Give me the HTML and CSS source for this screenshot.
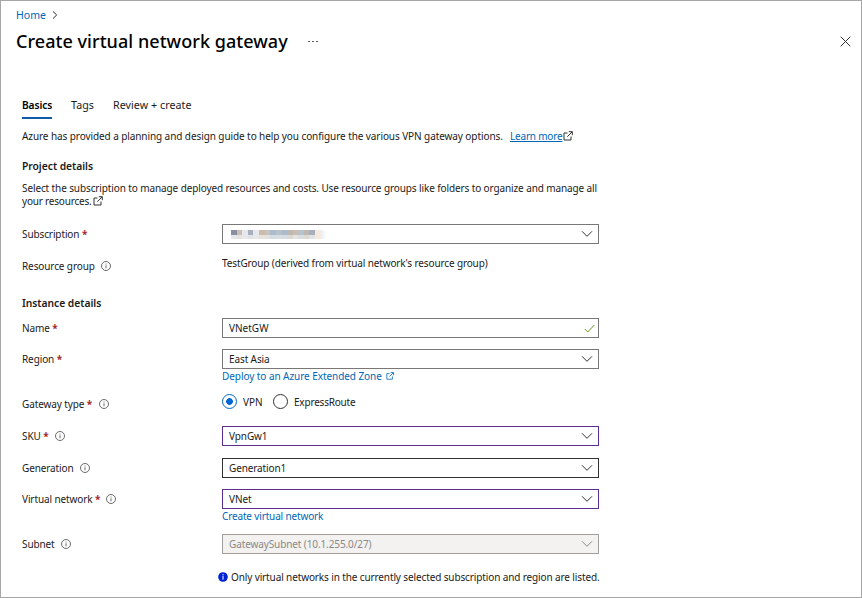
FILE: index.html
```html
<!DOCTYPE html>
<html lang="en">
<head>
    <meta charset="UTF-8">
    <meta name="viewport" content="width=device-width, initial-scale=1.0">
    <title>Create virtual network gateway</title>
    <link rel="stylesheet" href="styles.css">
</head>

<body>
    <!-- shared icons -->
    <svg class="sprite" aria-hidden="true">
        <symbol id="chevron" viewBox="0 0 12 8"><path d="M1 1.3l5 5 5-5"/></symbol>
        <symbol id="info" viewBox="0 0 10 10"><circle cx="5" cy="5" r="4.5"/><path d="M5 4.3v3M5 2.6v.9"/></symbol>
        <symbol id="external" viewBox="0 0 10 10"><path d="M4.5 2H1v7h7V5.5M5.8.7h3.5v3.5M9.2.8L4.3 5.7"/></symbol>
    </svg>

    <div class="blade">
        <nav class="breadcrumb">
            <a href="#">Home</a>
            <svg class="crumb-arrow" viewBox="0 0 6 8"><path d="M1 .5L4.7 4 1 7.5"/></svg>
        </nav>

        <header class="title-bar">
            <h1>Create virtual network gateway</h1>
            <span class="more"><i></i><i></i><i></i></span>
            <svg class="close" viewBox="0 0 11 11"><path d="M.7.7l9.6 9.6M10.3.7L.7 10.3"/></svg>
        </header>

        <div class="tabs">
            <a class="tab active" href="#">Basics</a>
            <a class="tab tab-tags" href="#">Tags</a>
            <a class="tab tab-review" href="#">Review + create</a>
        </div>

        <main>
            <p class="intro"><span>Azure has provided a planning and design guide to help you configure the various VPN gateway options.</span><a class="learn" href="#">Learn more</a><svg class="external"><use href="#external"/></svg></p>

            <h2 class="project">Project details</h2>
            <p class="desc">Select the subscription to manage deployed resources and costs. Use resource groups like folders to organize and manage all<br><span class="desc-end">your resources.</span><svg class="external"><use href="#external"/></svg></p>

            <form>
                <div class="row row-subscription">
                    <label>Subscription <b>*</b></label>
                    <div class="control">
                        <div class="box">
                            <span class="mosaic">
                                <i class="c1"></i><i class="c2"></i><i class="c3"></i><i class="c4"></i><i class="c3"></i><i class="c5"></i><i class="c6"></i><i class="c7"></i><i class="c8"></i><i class="c7"></i><i class="c9"></i><i class="c5"></i><i class="c8"></i><i class="c9"></i><i class="c4"></i><i class="c10"></i><i class="c11"></i>
                            </span>
                            <svg class="chevron"><use href="#chevron"/></svg>
                        </div>
                    </div>
                </div>
                <div class="row row-group">
                    <label>Resource group <svg class="info"><use href="#info"/></svg></label>
                    <div class="control"><span class="value">TestGroup (derived from virtual network's resource group)</span></div>
                </div>

                <h2 class="instance">Instance details</h2>
                <div class="row row-name">
                    <label>Name <b>*</b></label>
                    <div class="control">
                        <div class="box box-name"><span>VNetGW</span><svg class="check" viewBox="0 0 11 9"><path d="M.8 5l3 3L10.3 1"/></svg></div>
                    </div>
                </div>
                <div class="row row-region">
                    <label>Region <b>*</b></label>
                    <div class="control">
                        <div class="box"><span>East Asia</span><svg class="chevron"><use href="#chevron"/></svg></div>
                        <a class="below deploy" href="#">Deploy to an Azure Extended Zone<svg class="external small"><use href="#external"/></svg></a>
                    </div>
                </div>
                <div class="row row-type">
                    <label>Gateway type <b>*</b> <svg class="info"><use href="#info"/></svg></label>
                    <div class="control radios">
                        <span class="radio checked"></span><span class="vpn">VPN</span>
                        <span class="radio"></span><span class="express">ExpressRoute</span>
                    </div>
                </div>
                <div class="row row-sku">
                    <label>SKU <b>*</b> <svg class="info"><use href="#info"/></svg></label>
                    <div class="control">
                        <div class="box edited"><span>VpnGw1</span><svg class="chevron"><use href="#chevron"/></svg></div>
                    </div>
                </div>
                <div class="row row-generation">
                    <label>Generation <svg class="info"><use href="#info"/></svg></label>
                    <div class="control">
                        <div class="box dark"><span>Generation1</span><svg class="chevron"><use href="#chevron"/></svg></div>
                    </div>
                </div>
                <div class="row row-vnet">
                    <label>Virtual network <b>*</b> <svg class="info"><use href="#info"/></svg></label>
                    <div class="control">
                        <div class="box edited"><span>VNet</span><svg class="chevron"><use href="#chevron"/></svg></div>
                        <a class="below create" href="#">Create virtual network</a>
                    </div>
                </div>
                <div class="row row-subnet">
                    <label>Subnet <svg class="info"><use href="#info"/></svg></label>
                    <div class="control">
                        <div class="box disabled"><span>GatewaySubnet (10.1.255.0/27)</span><svg class="chevron"><use href="#chevron"/></svg></div>
                    </div>
                </div>
                <div class="note">
                    <svg class="note-icon" viewBox="0 0 10 10"><circle cx="5" cy="5" r="4.8"/><path d="M5 4v3.7M5 2v1.3"/></svg>
                    <span>Only virtual networks in the currently selected subscription and region are listed.</span>
                </div>
            </form>
        </main>
    </div>
</body>
</html>
```
FILE: styles.css
```css
* {
    box-sizing: border-box;
}

body {
    margin: 0;
    background: #fff;
    color: #1b1a19;
    font-family: "Noto Sans", "Open Sans", sans-serif;
    font-size: 10px;
    line-height: 14px;
    letter-spacing: -0.11px;
}

a {
    color: #0067b8;
    text-decoration: none;
}

h1, h2, p {
    margin: 0;
}

svg {
    fill: none;
    stroke: #323130;
    flex: none;
}

.sprite {
    display: none;
}

.blade {
    width: 862px;
    height: 598px;
    border: 1px solid #a6a6a6;
    overflow: hidden;
    white-space: nowrap;
}

.breadcrumb {
    display: flex;
    align-items: center;
    height: 14px;
    margin: 7px 0 0 15px;
    gap: 6px;
    font-size: 10.5px;
    letter-spacing: 0;
}

.crumb-arrow {
    width: 6px;
    height: 8px;
}

.title-bar {
    display: flex;
    align-items: center;
    height: 26px;
    margin-top: 6px;
    padding: 0 10px 0 15px;
}

h1 {
    width: 292px;
    font-size: 18px;
    font-weight: 500;
    line-height: 26px;
    letter-spacing: 0.05px;
    color: #000;
}

.more {
    display: flex;
    gap: 2px;
}

.more i {
    width: 2px;
    height: 1px;
    background: #605e5c;
}

.close {
    width: 11px;
    height: 11px;
    margin-left: auto;
}

.tabs {
    display: flex;
    margin: 44px 0 0 21px;
    font-size: 10.7px;
    letter-spacing: 0.05px;
}

.tab {
    height: 21px;
    color: #1b1a19;
}

.tab.active {
    width: 30px;
    border-bottom: 2px solid #0f5ba7;
    color: #000;
    font-size: 10.2px;
    font-weight: 600;
    letter-spacing: -0.1px;
}

.tab-tags {
    margin-left: 19px;
    width: 42px;
}

main {
    padding-left: 21px;
}

.intro {
    display: flex;
    align-items: center;
    margin-top: 10px;
    letter-spacing: -0.085px;
}

.intro span {
    width: 488px;
}

.learn {
    width: 52px;
    letter-spacing: -0.2px;
    text-decoration: underline;
}

.external {
    width: 10px;
    height: 10px;
    margin-left: 1px;
}

.desc .external {
    margin-left: 1px;
    vertical-align: -1px;
}

.external.small {
    width: 8px;
    height: 8px;
    margin-left: 4px;
    stroke: #0067b8;
}

h2 {
    font-size: 10.3px;
    font-weight: 600;
    line-height: 14px;
    letter-spacing: -0.03px;
}

.project {
    margin-top: 16px;
}

.desc {
    height: 27px;
    margin-top: 9px;
    line-height: 13px;
}

.desc-end {
    letter-spacing: -0.2px;
}

.row {
    display: flex;
}

label {
    display: flex;
    align-items: center;
    width: 200px;
    height: 20px;
    white-space: pre;
}

label b {
    color: #a4262c;
}

.info {
    width: 10px;
    height: 10px;
    margin-left: 4px;
    stroke: #484644;
    stroke-width: .8;
}

b ~ .info {
    margin-left: 7px;
}

.row-vnet .info {
    margin-left: 6px;
}

.control {
    width: 377px;
}

.box {
    display: flex;
    align-items: center;
    justify-content: space-between;
    height: 20px;
    padding: 0 5px 0 6px;
    border: 1px solid #7a7876;
}

.box-name {
    padding-right: 3px;
    letter-spacing: 0;
}

.box.edited {
    border-color: #5c2e91;
}

.box.dark {
    border-color: #323130;
}

.box.disabled {
    border-color: #a19f9d;
    background: #f3f2f1;
    color: #8a8886;
}

.disabled .chevron {
    stroke: #8a8886;
}

.chevron {
    width: 12px;
    height: 8px;
}

.check {
    width: 11px;
    height: 9px;
    stroke: #6b9a1f;
}

.mosaic {
    display: flex;
    margin-left: 2px;
}

.mosaic i {
    width: 5.6px;
    height: 9px;
}

.c1 { background: linear-gradient(#8a8fa0 60%, #e4e6ea 60%); }
.c2 { background: linear-gradient(#c9bfba 60%, #e8e0dc 60%); }
.c3 { background: #e6e8ec; }
.c4 { background: linear-gradient(#a8b0c0 60%, #e0e2e6 60%); }
.c5 { background: linear-gradient(#cdbcae 60%, #e6e2dd 60%); }
.c6 { background: linear-gradient(#c6c2c0 60%, #e4e0dc 60%); }
.c7 { background: linear-gradient(#adbccb 60%, #d4dce4 60%); }
.c8 { background: linear-gradient(#b8c2ca 60%, #d8dee2 60%); }
.c9 { background: linear-gradient(#beb8b2 60%, #dcd8d2 60%); }
.c10 { background: #f8e9df; }
.c11 { background: linear-gradient(90deg, #e2effa, #fff); }

.below {
    display: flex;
    align-items: center;
    height: 14px;
    letter-spacing: -0.06px;
}

.below.create {
    letter-spacing: -0.15px;
}

.row-subscription {
    margin-top: 15px;
}

.row-group {
    margin-top: 12px;
}

.value {
    display: block;
    letter-spacing: -0.13px;
}

.instance {
    margin-top: 20px;
}

.row-name {
    margin-top: 8px;
}

.row-region {
    margin-top: 11px;
}

.row-type {
    margin-top: 11px;
}

.radios {
    display: flex;
    align-items: center;
    height: 15px;
}

.radio {
    width: 15px;
    height: 15px;
    border: 1px solid #323130;
    border-radius: 50%;
}

.radio.checked {
    border-color: #0067b8;
    background: radial-gradient(#0067d8 3px, #fff 3.7px);
}

.vpn {
    width: 30px;
    margin-left: 6px;
    letter-spacing: 0;
}

.express {
    margin-left: 6px;
    letter-spacing: -0.2px;
}

.row-sku {
    margin-top: 12px;
}

.row-generation {
    margin-top: 12px;
}

.row-vnet {
    margin-top: 11px;
}

.row-subnet {
    margin-top: 11px;
}

.note {
    display: flex;
    align-items: center;
    margin: 16px 0 0 196px;
    gap: 3px;
    letter-spacing: -0.12px;
}

.note-icon {
    width: 10px;
    height: 10px;
    stroke: #fff;
}

.note-icon circle {
    fill: #0022d0;
    stroke: none;
}
```
